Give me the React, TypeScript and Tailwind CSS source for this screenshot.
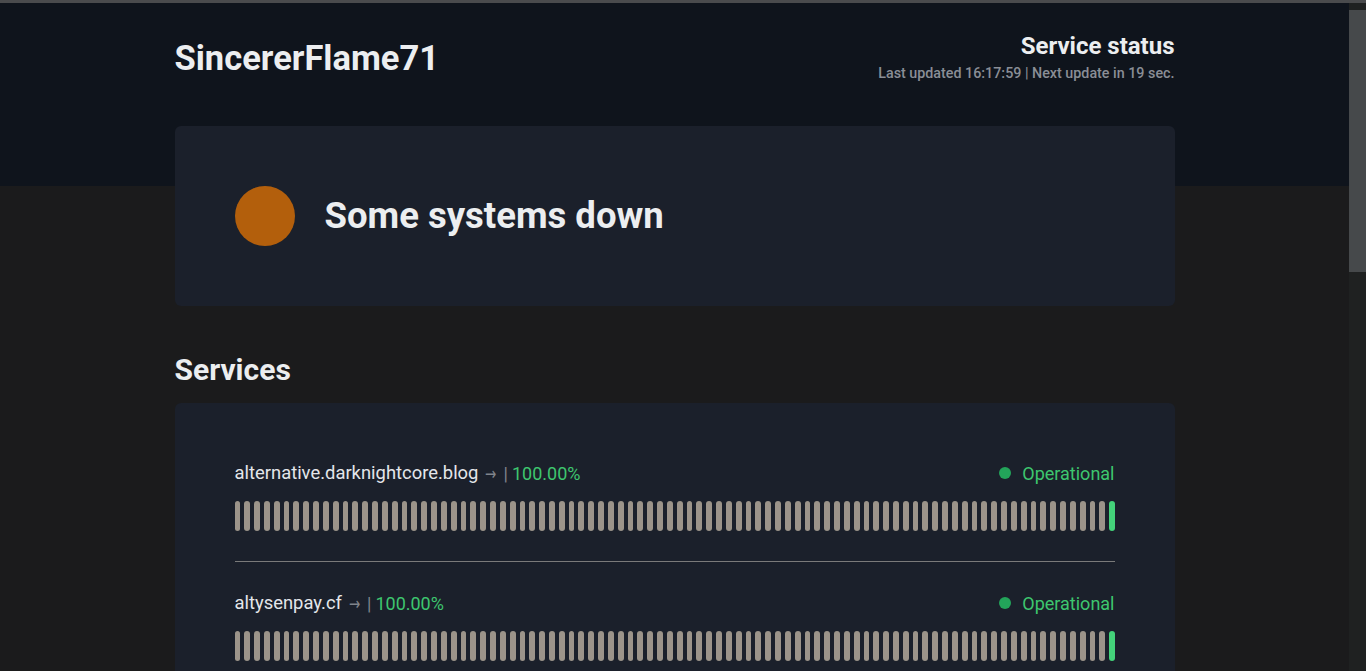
import React from "react"

const services = [
  { name: "alternative.darknightcore.blog", uptime: "100.00%" },
  { name: "altysenpay.cf", uptime: "100.00%" },
  { name: "api.darknightcore.blog", uptime: "100.00%" },
]

const BAR_COUNT = 90

function UptimeBars() {
  return (
    <div className="flex gap-1 h-[30px]">
      {Array.from({ length: BAR_COUNT }).map((_, i) => (
        <div
          key={i}
          className={
            i === BAR_COUNT - 1
              ? "flex-1 rounded-full bg-[#44d27a]"
              : "flex-1 rounded-full bg-[#9c948a]"
          }
        />
      ))}
    </div>
  )
}

function ServiceRow({ name, uptime, first }: { name: string; uptime: string; first: boolean }) {
  return (
    <div className={first ? "pb-[30px]" : "pt-[29px] pb-[30px] border-t border-[#7a7a7a]"}>
      <div className="flex items-center justify-between mb-4 h-6">
        <div className="flex items-center text-[18px]">
          <span className="text-[#e4e6ea] text-[18.4px]">{name}</span>
          <span className="text-[#80848c] text-[18px] font-['DejaVu_Sans',sans-serif] scale-x-75 ml-[5px]">→</span>
          <span className="text-[#80848c] ml-[5px]">|</span>
          <span className="text-[#3ec66f] ml-[4px]">{uptime}</span>
        </div>
        <div className="flex items-center">
          <span className="w-3 h-3 rounded-full bg-[#23a45a] mr-[11px]" />
          <span className="text-[#3ec66f] text-[18px]">Operational</span>
        </div>
      </div>
      <UptimeBars />
    </div>
  )
}

export default function App() {
  return (
    <div className="h-[671px] overflow-hidden flex flex-col bg-[#1b1b1c] font-['Roboto',sans-serif]">
      <div className="h-[3px] bg-[#4a4b4d] shrink-0" />
      <div className="flex flex-1 min-h-0">
        <div className="flex-1 min-w-0 relative">
          <div className="h-[183px] bg-[#0f141c]" />
          <div className="absolute inset-x-0 top-0 flex justify-center">
            <div className="w-[1000px]">
              <header className="flex justify-between items-start pt-[33px]">
                <h1 className="text-[34.5px] font-bold text-[#eceef0] leading-none mt-[5px]">
                  SincererFlame71
                </h1>
                <div className="text-right">
                  <div className="text-2xl font-bold text-[#eceef0] leading-8 -mt-[6px]">
                    Service status
                  </div>
                  <div className="text-[14.3px] font-medium text-[#8a8e96] leading-5 mt-[1px]">
                    Last updated 16:17:59 | Next update in 19 sec.
                  </div>
                </div>
              </header>

              <section className="mt-[43px] bg-[#1b202b] rounded-md p-[60px] flex items-center">
                <span className="w-[60px] h-[60px] rounded-full bg-[#b35f0c] shrink-0" />
                <span className="ml-[30px] text-[36.5px] font-bold text-[#eceef0] leading-none">
                  Some systems down
                </span>
              </section>

              <h2 className="mt-[46px] text-[30px] font-bold text-[#eceef0] leading-9">Services</h2>

              <section className="mt-[15px] bg-[#1b202b] rounded-md px-[60px] pt-[58px]">
                {services.map((s, i) => (
                  <ServiceRow key={s.name} name={s.name} uptime={s.uptime} first={i === 0} />
                ))}
              </section>
            </div>
          </div>
        </div>
        <div className="w-[17px] shrink-0 bg-[#1f2121] pt-[7px]">
          <div className="h-[262px] bg-[#46494b]" />
        </div>
      </div>
    </div>
  )
}
